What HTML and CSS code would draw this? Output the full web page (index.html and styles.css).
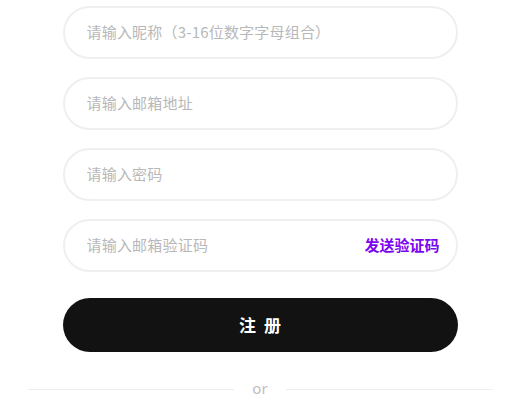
FILE: index.html
```html
<!DOCTYPE html>
<html lang="zh-CN">
<head>
<meta charset="utf-8">
<title>注册</title>
<link rel="stylesheet" href="styles.css">
</head>
<body>
<main class="page">
  <form class="form">
    <label class="field"><input class="input" type="text" placeholder="请输入昵称（3-16位数字字母组合）"></label>
    <label class="field"><input class="input" type="text" placeholder="请输入邮箱地址"></label>
    <label class="field"><input class="input" type="password" placeholder="请输入密码"></label>
    <label class="field field-code">
      <input class="input" type="text" placeholder="请输入邮箱验证码">
      <span class="send">发送验证码</span>
    </label>
    <button class="submit" type="button">注 册</button>
  </form>
  <div class="divider"><span class="line"></span><span class="or">or</span><span class="line"></span></div>
</main>
</body>
</html>
```
FILE: styles.css
```css
* { box-sizing: border-box; }
html, body { margin: 0; padding: 0; background: #fff; }
body {
  font-family: "Noto Sans CJK SC", "Noto Sans", sans-serif;
}
.page {
  width: 520px;
  padding-top: 6px;
  display: flex;
  flex-direction: column;
  align-items: center;
}
.form {
  width: 395px;
  display: flex;
  flex-direction: column;
  gap: 18px;
}
.field {
  height: 53px;
  border: 2px solid #efefef;
  border-radius: 27px;
  display: flex;
  align-items: center;
  padding: 0 16px 0 22px;
}
.input {
  flex: 1;
  min-width: 0;
  border: none;
  outline: none;
  background: transparent;
  font-family: "Noto Sans CJK SC", sans-serif;
  font-size: 15px;
  letter-spacing: 0.2px;
  color: #333;
  padding: 0;
  margin-top: -2px;
}
.input::placeholder { color: #b8b8b8; }
.send {
  font-size: 15px;
  font-weight: 700;
  color: #7b05f0;
  white-space: nowrap;
  margin-top: -2px;
}
.submit {
  margin-top: 8px;
  height: 54px;
  border: none;
  border-radius: 27px;
  background: #121212;
  color: #fff;
  font-family: "Noto Sans CJK SC", sans-serif;
  font-size: 17px;
  font-weight: 700;
  letter-spacing: 2px;
  padding: 0 0 2px 2px;
}
.divider {
  margin-top: 28px;
  width: 465px;
  display: flex;
  align-items: center;
  gap: 18px;
}
.line {
  flex: 1;
  height: 1px;
  background: #eeeeee;
}
.or {
  font-family: "Noto Sans", sans-serif;
  font-size: 15px;
  color: #bdbdbd;
  line-height: 20px;
  margin-top: -2px;
}
```
